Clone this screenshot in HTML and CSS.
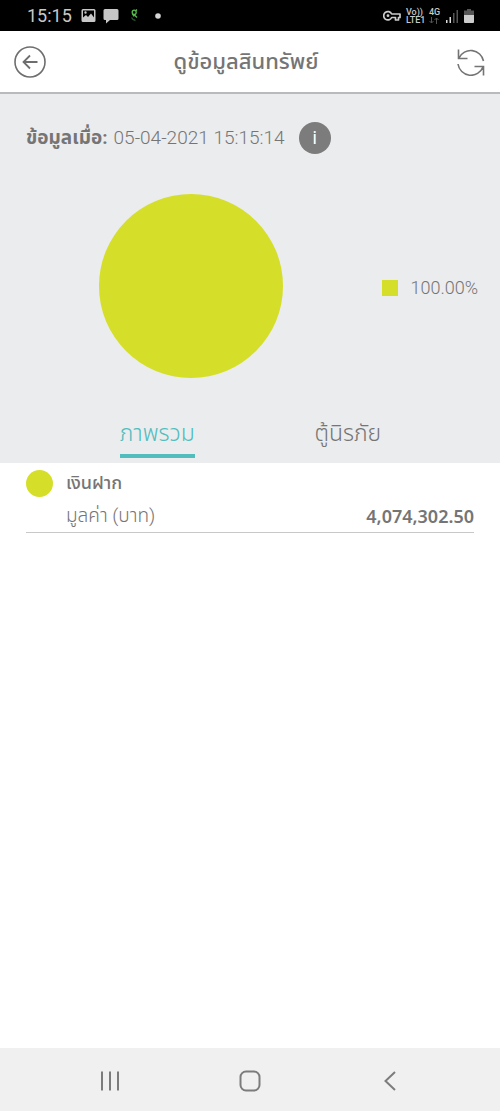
FILE: index.html
```html
<!DOCTYPE html>
<html lang="th">
<head>
<meta charset="utf-8">
<meta name="viewport" content="width=device-width, initial-scale=1">
<title>ดูข้อมูลสินทรัพย์</title>
<link rel="stylesheet" href="styles.css">
</head>
<body>
<div class="status">
  <span class="status-time">15:15</span>
  <svg class="status-left" width="81" height="16" viewBox="0 0 81 16" aria-hidden="true">
    <path fill="#c8c8c8" fill-rule="evenodd" d="M2 1h11q1.500 0 1.500 1.500v10q0 1.500-1.500 1.500H2Q.5 14 .5 12.500v-10Q.5 1 2 1zM2 2.500v7l3-2.500 2 2 3-3.500 3 4v-7zM4.500 3.300a1.200 1.200 0 1 1 0 2.400a1.200 1.200 0 0 1 0-2.400z"/>
    <path fill="#c8c8c8" d="M24 1h12q1.500 0 1.500 1.500v8q0 1.500-1.500 1.500h-7l-4 3.500V12h-1q-1.500 0-1.500-1.500v-8Q22.500 1 24 1z"/>
    <g fill="none" stroke-width="1.300">
      <ellipse cx="53.200" cy="4.300" rx="2" ry="2.200" stroke="#57b84b"/>
      <path stroke="#57b84b" d="M54.500 3l1.500-1.500M53 6.500l3 3M51.500 6l1.500 2.500"/>
      <path stroke="#24552a" d="M50.500 9.500q1 2.500 4 3"/>
    </g>
    <circle cx="77" cy="8" r="2.800" fill="#d5d5d5"/>
  </svg>
  <span class="status-space"></span>
  <svg class="key" width="18" height="12" viewBox="0 0 18 12" aria-hidden="true">
    <path fill="none" stroke="#ccc" stroke-width="1.700" stroke-linejoin="round" d="M8.700 4H17v3.500h-1.500V10h-3V7.500H8.700A4.200 4.200 0 1 1 8.700 4z"/>
    <circle cx="5" cy="5.700" r="1.400" fill="#ccc"/>
  </svg>
  <span class="volte">Vo))<br>LTE1</span>
  <span class="net">4G<svg width="10" height="7" viewBox="0 0 10 7" aria-hidden="true"><path fill="none" stroke="#555" d="M2.500 0v6M.5 4l2 2 2-2M7.500 7V1M5.500 3l2-2 2 2"/></svg></span>
  <svg class="signal" width="12" height="14" viewBox="0 0 12 14" aria-hidden="true">
    <path fill="#ddd" d="M0 11h1.500v3H0zM3.500 8H5v6H3.500z"/>
    <path fill="#555" d="M7 4h1.500v10H7zM10.500 1H12v13h-1.500z"/>
  </svg>
  <svg class="battery" width="10" height="14" viewBox="0 0 10 14" aria-hidden="true">
    <path fill="#555" d="M3 0h4v1.500h3V6H0V1.500h3z"/>
    <path fill="#ccc" d="M0 6h10v7q0 1-1 1H1q-1 0-1-1z"/>
  </svg>
</div>
<header class="header">
  <button class="icon-button" aria-label="กลับ">
    <svg width="34" height="34" viewBox="0 0 34 34" fill="none" stroke="#6e6e6e" stroke-width="1.600">
      <circle cx="17" cy="17" r="15"/>
      <path stroke-width="1.800" d="M24.500 17H11M17 10.500L10.500 17l6.500 6.500"/>
    </svg>
  </button>
  <h1 class="title">ดูข้อมูลสินทรัพย์</h1>
  <button class="icon-button refresh" aria-label="รีเฟรช">
    <svg width="28" height="28" viewBox="0 0 28 28" fill="none" stroke="#747474" stroke-width="1.600">
      <path d="M26.500 13A13 13 0 0 0 2 10M1.500 1.500V10.500h9M1 16a13 13 0 0 0 25 3M26.500 27.500v-9h-9"/>
    </svg>
  </button>
</header>
<main class="main">
  <section class="summary">
    <div class="updated">
      <b>ข้อมูลเมื่อ:</b>
      <time class="stamp" datetime="2021-04-05T15:15:14">05-04-2021 15:15:14</time>
      <button class="info" aria-label="ข้อมูลเพิ่มเติม">i</button>
    </div>
    <div class="chart">
      <div class="pie"></div>
      <div class="legend"><span class="swatch"></span>100.00%</div>
    </div>
    <div class="tabs" role="tablist">
      <button class="tab tab-active" role="tab" aria-selected="true">ภาพรวม</button>
      <button class="tab" role="tab" aria-selected="false">ตู้นิรภัย</button>
    </div>
  </section>
  <section class="asset">
    <span class="dot"></span>
    <div class="asset-body">
      <h2 class="asset-name">เงินฝาก</h2>
      <div class="asset-row"><span class="asset-label">มูลค่า (บาท)</span><strong class="amount">4,074,302.50</strong></div>
    </div>
  </section>
</main>
<nav class="nav">
  <button class="nav-button" aria-label="แอปล่าสุด"><svg width="20" height="20" viewBox="0 0 20 20" stroke="#7c7c7c" stroke-width="2"><path d="M2 .5v19M10 .5v19M18 .5v19"/></svg></button>
  <button class="nav-button" aria-label="หน้าหลัก"><svg width="22" height="22" viewBox="0 0 22 22" fill="none" stroke="#7c7c7c" stroke-width="2"><rect x="1.500" y="1.500" width="19" height="19" rx="5.500"/></svg></button>
  <button class="nav-button" aria-label="ย้อนกลับ"><svg width="20" height="20" viewBox="0 0 20 20" fill="none" stroke="#7c7c7c" stroke-width="2"><path d="M15 1L5.500 10l9.500 9"/></svg></button>
</nav>
</body>
</html>
```
FILE: styles.css
```css
* { box-sizing: border-box; }
body {
  margin: 0;
  min-height: 100vh;
  display: flex;
  flex-direction: column;
  background: #fff;
  color: #757575;
  font-family: Roboto, "Noto Sans Thai", "Noto Sans", sans-serif;
  font-size: 18px;
}
button {
  border: 0;
  padding: 0;
  background: none;
  color: inherit;
  font: inherit;
}
svg { display: block; }
h1, h2 { margin: 0; }

.status {
  height: 31px;
  padding: 0 26px 0 27px;
  display: flex;
  align-items: center;
  background: #000;
  color: #c8c8c8;
}
.status-time { width: 54px; }
.status-space { flex: 1; }
.key { margin-right: 5px; }
.volte, .net {
  font-size: 9px;
  line-height: 8px;
  font-weight: 500;
}
.volte { width: 23px; }
.net { width: 17px; }
.net svg { margin-top: 1px; }
.signal { margin-right: 6px; }

.header {
  height: 63px;
  padding: 0 15px 0 13px;
  display: grid;
  grid-template-columns: 34px 1fr 40px;
  align-items: center;
  border-bottom: 2px solid #b9babb;
}
.refresh { justify-self: end; }
.title {
  text-align: center;
  font-size: 22px;
  line-height: 32px;
  font-weight: 500;
}

.main { flex: 1; }
.summary {
  background: #ebecee;
  padding-top: 28px;
}
.updated {
  display: flex;
  align-items: center;
  padding-left: 26px;
  font-size: 19px;
  line-height: 32px;
}
.stamp {
  margin: 0 14px 0 6px;
  font-weight: 300;
}
.info {
  width: 32px;
  height: 32px;
  border-radius: 50%;
  background: #7c7c7d;
  color: #fff;
  font-size: 18px;
}
.chart {
  display: flex;
  align-items: center;
  justify-content: space-between;
  padding: 40px 22px 0 99px;
}
.pie {
  width: 184px;
  height: 184px;
  border-radius: 50%;
  background: #d5de29;
}
.legend {
  display: flex;
  align-items: center;
  font-weight: 300;
  line-height: 24px;
  padding-top: 4px;
}
.swatch {
  width: 16px;
  height: 16px;
  margin-right: 12px;
  background: #d5de29;
}
.tabs {
  display: grid;
  grid-template-columns: 1fr 1fr;
  justify-items: center;
  padding: 36px 57px 5px 62px;
}
.tab {
  height: 44px;
  border-bottom: 4px solid transparent;
  font-size: 23px;
  font-weight: 300;
}
.tab-active {
  color: #52bdbd;
  border-color: #52bdbd;
}

.asset {
  display: flex;
  margin: 0 26px;
  padding-top: 7px;
  border-bottom: 1px solid #c8c8c8;
}
.dot {
  width: 27px;
  height: 27px;
  margin-right: 13px;
  border-radius: 50%;
  background: #d5de29;
}
.asset-body { flex: 1; }
.asset-name {
  font-size: 18px;
  line-height: 26px;
  font-weight: 500;
}
.asset-row {
  display: flex;
  justify-content: space-between;
  align-items: center;
  height: 36px;
  padding-top: 4px;
  font-weight: 300;
}
.asset-label { font-size: 19px; }
.amount {
  font-family: "Noto Sans", Roboto, sans-serif;
  font-size: 18px;
  font-weight: 600;
}

.nav {
  height: 63px;
  padding: 2px 40px 0;
  display: grid;
  grid-template-columns: repeat(3, 1fr);
  background: #f0f0f0;
}
.nav-button {
  display: grid;
  place-items: center;
}
```
